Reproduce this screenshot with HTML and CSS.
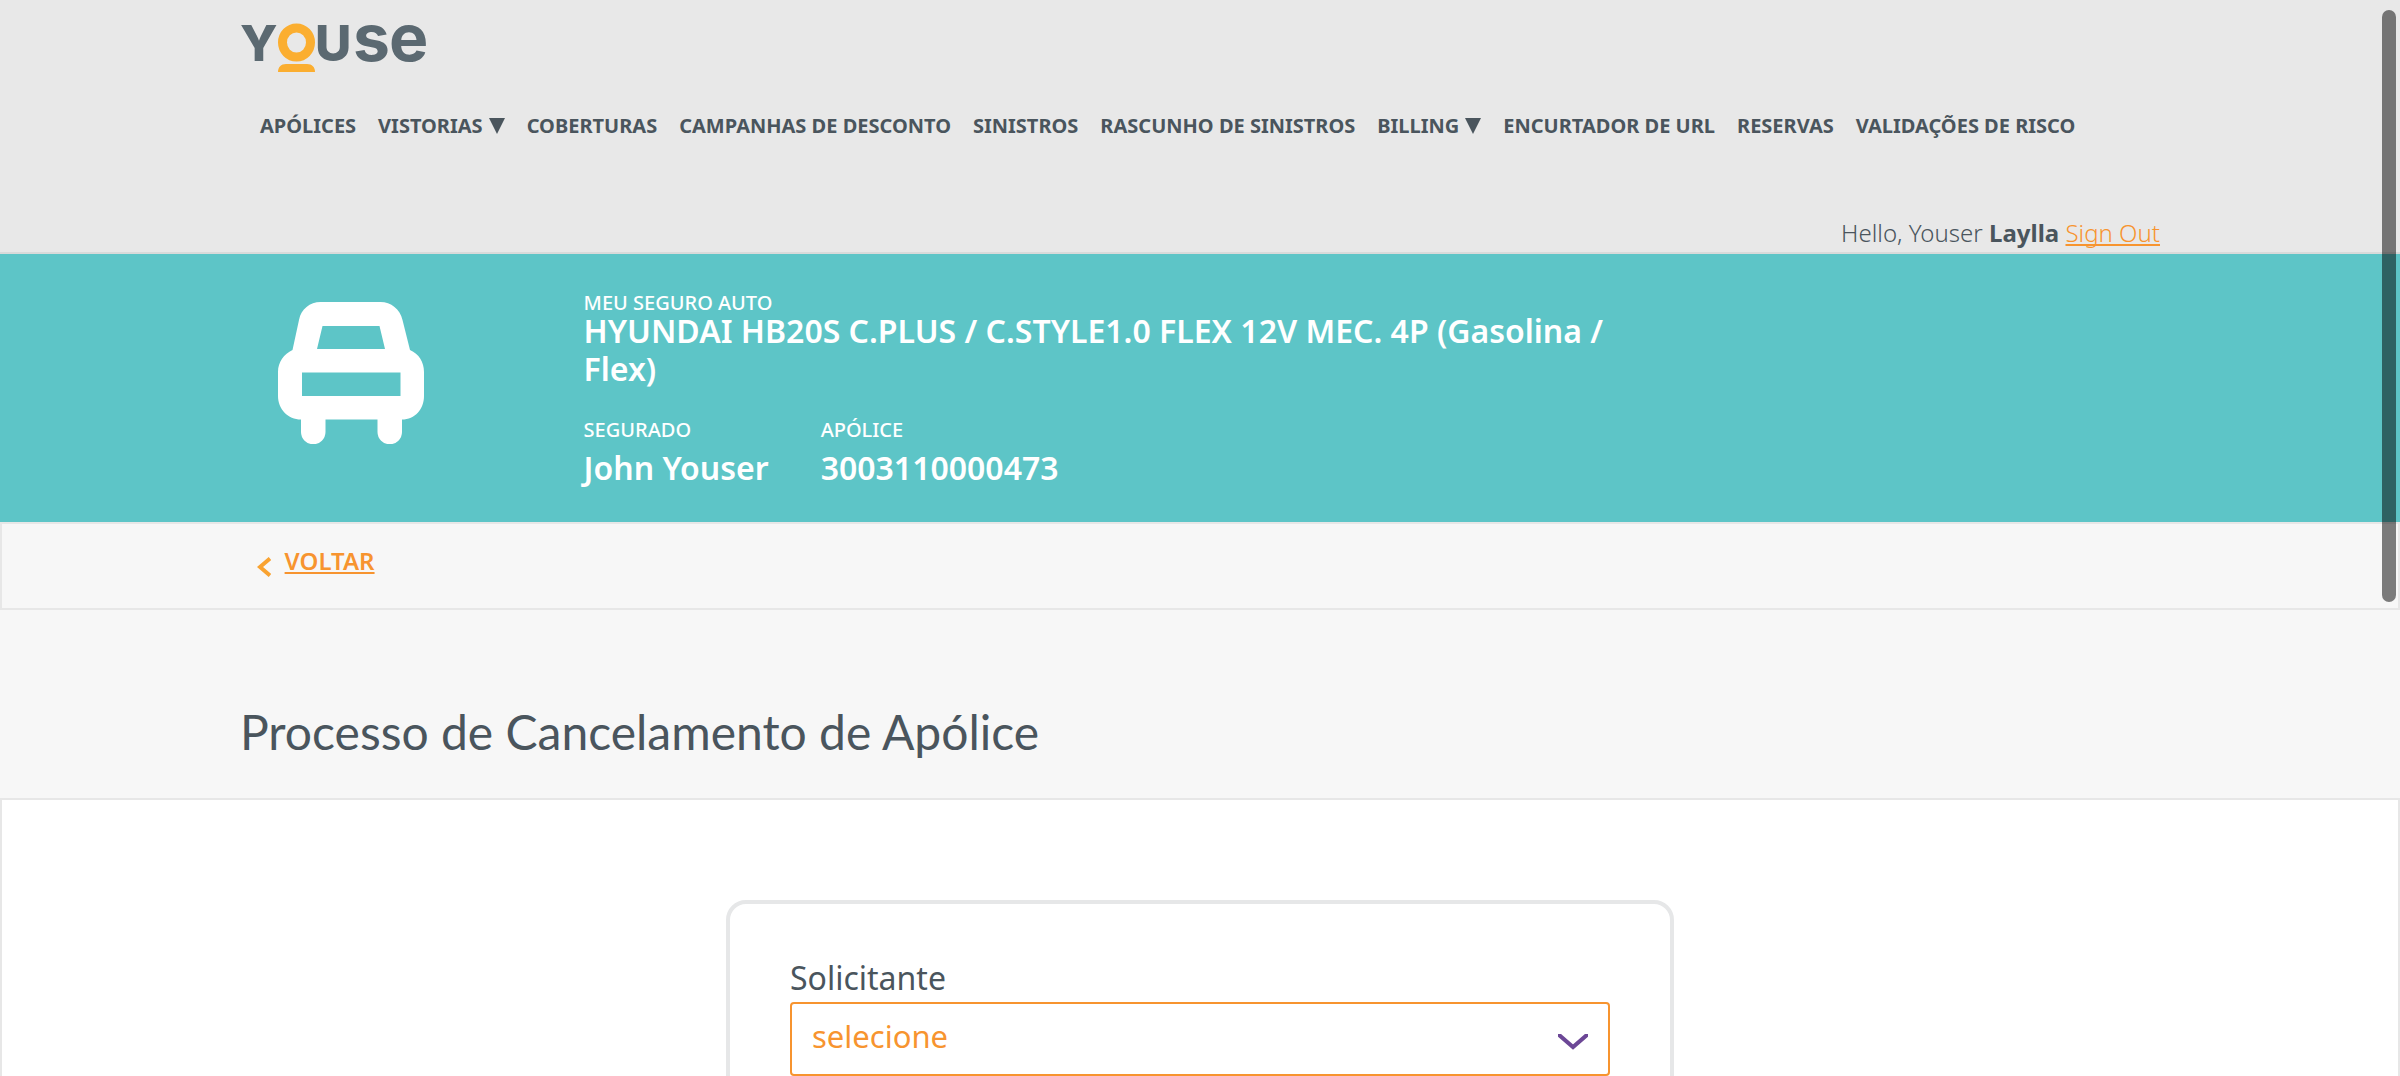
FILE: index.html
```html
<!DOCTYPE html>
<html lang="pt-BR">
<head>
<meta charset="utf-8">
<meta name="viewport" content="width=device-width, initial-scale=1">
<title>Processo de Cancelamento de Apólice</title>
<link rel="stylesheet" href="styles.css">
</head>
<body>
<header class="header">
  <div class="container">
    <a class="logo" href="#">
      <svg width="192" height="48" viewBox="0 0 192 48" role="img" aria-label="Youse">
        <g class="logo-text">
          <text class="logo-cap" x="0" y="37">Y</text>
          <text class="logo-cap" x="75" y="37">U</text>
          <text class="logo-low" x="113" y="37">s</text>
          <text class="logo-low" x="149" y="37">e</text>
        </g>
        <ellipse class="logo-ring" cx="56.500" cy="18.500" rx="14" ry="14.500"/>
        <path class="logo-bar" d="M38 48c0-5 3-8 8-8h21c5 0 8 3 8 8z"/>
      </svg>
    </a>
    <nav class="nav">
      <a href="#">APÓLICES</a>
      <a href="#">VISTORIAS<svg class="caret" width="16" height="16" viewBox="0 0 16 16"><path d="M0 0h16L8 16z"/></svg></a>
      <a href="#">COBERTURAS</a>
      <a href="#">CAMPANHAS DE DESCONTO</a>
      <a href="#">SINISTROS</a>
      <a href="#">RASCUNHO DE SINISTROS</a>
      <a href="#">BILLING<svg class="caret" width="16" height="16" viewBox="0 0 16 16"><path d="M0 0h16L8 16z"/></svg></a>
      <a href="#">ENCURTADOR DE URL</a>
      <a href="#">RESERVAS</a>
      <a href="#">VALIDAÇÕES DE RISCO</a>
    </nav>
    <p class="user">Hello, Youser <strong>Laylla</strong> <a href="#">Sign Out</a></p>
  </div>
</header>

<section class="policy">
  <div class="container policy-row">
    <div class="policy-icon">
      <svg width="146" height="142" viewBox="0 0 146 142" aria-hidden="true">
        <path fill-rule="evenodd" d="M14.500 48 21 18C23 7 32 0 42.500 0h60c10.500 0 19.500 7 22 18l7.500 30C141 52 146 60 146 70v24c0 13-9 23.500-22 23.500V130a12.200 12.200 0 0 1-24.500 0v-12.500h-52V130a12.200 12.200 0 0 1-24.500 0v-12.500C10 117.500 0 107 0 94V70c0-10 6-18 14.500-22zM44.500 24 39 47h68l-5.500-23zM24 70.500V94h98.500V70.500z"/>
      </svg>
    </div>
    <div class="policy-info">
      <p class="caption">MEU SEGURO AUTO</p>
      <h2 class="value">HYUNDAI HB20S C.PLUS / C.STYLE1.0 FLEX 12V MEC. 4P (Gasolina / Flex)</h2>
      <dl class="details">
        <div>
          <dt class="caption">SEGURADO</dt>
          <dd class="value">John Youser</dd>
        </div>
        <div>
          <dt class="caption">APÓLICE</dt>
          <dd class="value">3003110000473</dd>
        </div>
      </dl>
    </div>
  </div>
</section>

<div class="back-bar">
  <div class="container">
    <a class="back" href="#">
      <svg width="14" height="20" viewBox="0 0 14 20" aria-hidden="true"><path d="M13 1.500 3 10l10 8.500"/></svg>
      <span>VOLTAR</span>
    </a>
  </div>
</div>

<div class="heading">
  <div class="container"><h1>Processo de Cancelamento de Apólice</h1></div>
</div>

<main class="panel">
  <form class="card">
    <label for="solicitante">Solicitante</label>
    <div class="select">
      <select id="solicitante"><option>selecione</option></select>
      <svg width="30" height="16" viewBox="0 0 30 16" aria-hidden="true"><path d="M0 0 15 13 30 0"/></svg>
    </div>
  </form>
</main>
<div class="scroll-thumb"></div>
</body>
</html>
```
FILE: styles.css
```css
* {
  box-sizing: border-box;
}

body {
  margin: 0;
  height: 100vh;
  display: flex;
  flex-direction: column;
  overflow: hidden;
  background: #f7f7f7;
  color: #4a555d;
  font-family: "Noto Sans", "Open Sans", sans-serif;
}

body > * {
  flex-shrink: 0;
}

h1, h2, p, dl, dd {
  margin: 0;
}

.container {
  width: 80%;
  margin: 0 auto;
}

/* Header */
.header {
  padding: 24px 0 3px;
  background: #e8e8e8;
  border-bottom: 2px solid #d8dada;
}

.logo {
  display: flex;
}

.logo svg {
  overflow: visible;
}

.logo-text {
  fill: #5b6971;
  font-family: Inter, sans-serif;
}

.logo-cap {
  font-size: 50px;
  font-weight: 800;
}

.logo-low {
  font-size: 66px;
  font-weight: 700;
}

.logo-ring {
  fill: none;
  stroke: #fbae30;
  stroke-width: 9;
}

.logo-bar {
  fill: #fbae30;
}

.nav {
  display: flex;
  gap: 22px;
  margin-top: 40px;
  padding-left: 20px;
  line-height: 28px;
}

.nav a {
  display: flex;
  align-items: center;
  gap: 6px;
  color: inherit;
  font-size: 20px;
  font-weight: 700;
  text-decoration: none;
  white-space: nowrap;
}

.caret {
  fill: currentColor;
}

.user {
  margin-top: 77px;
  font-size: 24px;
  font-weight: 300;
  line-height: 32px;
  text-align: right;
}

.user strong {
  font-weight: 700;
}

.user a,
.back {
  color: #f7942f;
}

.user a,
.back span {
  text-decoration: underline;
  text-decoration-thickness: 2px;
  text-underline-offset: 2px;
  text-decoration-skip-ink: none;
}

/* Policy summary */
.policy {
  padding: 40px 0 35px;
  background: #5dc5c7;
  color: #fff;
}

.policy-row {
  display: flex;
}

.policy-icon {
  width: 18%;
  padding: 8px 38px 0;
}

.policy-icon svg {
  display: block;
  fill: #fff;
}

.policy-info {
  width: 56%;
  margin-left: -2px;
}

.caption {
  font-size: 20px;
  font-weight: 500;
  line-height: 18px;
}

.value {
  font-size: 32px;
  font-weight: 600;
  line-height: 38px;
}

.details {
  display: flex;
  gap: 52px;
  margin-top: 33px;
}

.details .value {
  margin-top: 10px;
}

/* Back link */
.back-bar {
  padding: 21px 0 31px;
  border: 2px solid #e7e7e7;
}

.back {
  display: flex;
  gap: 14px;
  width: fit-content;
  padding-left: 15px;
  font-size: 24px;
  font-weight: 600;
  line-height: 32px;
  text-decoration: none;
}

.back svg {
  margin-top: 12px;
  fill: none;
  stroke: #f9a331;
  stroke-width: 4;
}

.heading {
  padding: 90px 0 34px;
}

.heading h1 {
  font-family: Lato, sans-serif;
  font-size: 48px;
  font-weight: 400;
  line-height: 64px;
}

/* Form */
.panel {
  padding: 100px 0;
  background: #fff;
  border: 2px solid #e7e7e7;
}

.card {
  width: 948px;
  max-width: 90%;
  margin: 0 auto;
  padding: 54px 60px 60px;
  border: 4px solid #e6e7e8;
  border-radius: 20px;
}

.card label {
  display: block;
  margin-bottom: 4px;
  font-size: 32px;
  line-height: 40px;
}

.select {
  position: relative;
}

.select select {
  display: block;
  appearance: none;
  width: 100%;
  height: 74px;
  padding: 0 60px 6px 20px;
  border: 2px solid #f7942f;
  border-radius: 4px;
  background: #fff;
  color: #f7942f;
  font-family: inherit;
  font-size: 31px;
}

.select svg {
  position: absolute;
  top: 32px;
  right: 22px;
  fill: none;
  stroke: #6c4796;
  stroke-width: 4;
  pointer-events: none;
}

.scroll-thumb {
  position: fixed;
  top: 10px;
  right: 4px;
  width: 14px;
  height: 55%;
  border-radius: 7px;
  background: rgba(0, 0, 0, 0.5);
}
```
